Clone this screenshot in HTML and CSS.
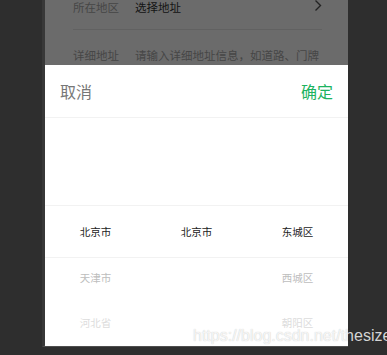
FILE: index.html
```html
<!DOCTYPE html>
<html lang="zh-CN">
<head>
    <meta charset="UTF-8">
    <meta name="viewport" content="width=device-width, initial-scale=1.0">
    <title>选择地址</title>
    <link rel="stylesheet" href="styles.css">
</head>
<body>
    <div class="device">
        <!-- Address form behind the mask -->
        <div class="page">
            <div class="form">
                <div class="field">
                    <span class="field-label">所在地区</span>
                    <span class="field-value">选择地址</span>
                    <svg class="chevron" width="8" height="13" viewBox="0 0 8 13">
                        <path d="M1.5 1.5 L6.5 6.5 L1.5 11.5" fill="none" stroke="currentColor" stroke-width="1.4"/>
                    </svg>
                </div>
                <div class="field">
                    <span class="field-label">详细地址</span>
                    <span class="field-placeholder">请输入详细地址信息，如道路、门牌号、小区、楼栋号、单元室等</span>
                </div>
            </div>
            <div class="mask"></div>
        </div>

        <!-- Region picker sheet -->
        <div class="sheet">
            <div class="sheet-header">
                <span class="cancel-btn">取消</span>
                <span class="confirm-btn">确定</span>
            </div>
            <div class="picker">
                <div class="picker-indicator"></div>
                <div class="picker-columns">
                    <div class="picker-column">
                        <div class="picker-item active">北京市</div>
                        <div class="picker-item near">天津市</div>
                        <div class="picker-item far">河北省</div>
                    </div>
                    <div class="picker-column">
                        <div class="picker-item active">北京市</div>
                    </div>
                    <div class="picker-column">
                        <div class="picker-item active">东城区</div>
                        <div class="picker-item near">西城区</div>
                        <div class="picker-item far">朝阳区</div>
                    </div>
                </div>
            </div>
        </div>
    </div>

    <div class="watermark">https://blog.csdn.net/thesize</div>
</body>
</html>
```

FILE: styles.css
```css
:root {
    --outer-bg: #2e2e2e;
    --green: #1db35f;
    --line: #f2f2f2;
}

* {
    margin: 0;
    padding: 0;
    box-sizing: border-box;
}

body {
    background: var(--outer-bg);
    font-family: 'Noto Sans CJK SC', 'Liberation Sans', sans-serif;
    width: 387px;
    height: 355px;
    overflow: hidden;
    position: relative;
}

.device {
    width: 306px;
    height: 347px;
    margin-left: 42px;
    border-left: 3px solid #383838;
    border-bottom: 2px solid #4e4e4e;
    display: flex;
    flex-direction: column;
}

.page {
    flex: 0 0 65px;
    position: relative;
    overflow: hidden;
    background: white;
}

.form {
    margin-top: -18px;
    padding: 0 26px 0 28px;
}

.field {
    display: flex;
    align-items: flex-start;
    height: 48px;
    padding-top: 16px;
    border-bottom: 1px solid #e6e6e6;
    font-size: 11.5px;
    line-height: 18px;
}

.field-label {
    flex: 0 0 62px;
    color: #a8a8a8;
}

.field-value {
    flex: 1;
    color: #333;
}

.field-placeholder {
    flex: 1;
    color: #a8a8a8;
}

.chevron {
    color: #555;
    margin-top: 1px;
    margin-right: 0;
}

.mask {
    position: absolute;
    inset: 0;
    background: rgba(0, 0, 0, 0.58);
}

.sheet {
    flex: 1;
    background: white;
    display: flex;
    flex-direction: column;
}

.sheet-header {
    height: 53px;
    padding: 0 15px;
    display: flex;
    justify-content: space-between;
    align-items: center;
    border-bottom: 1px solid var(--line);
    font-size: 16px;
}

.cancel-btn {
    color: #777;
}

.confirm-btn {
    color: var(--green);
}

.picker {
    flex: 1;
    position: relative;
    overflow: hidden;
}

.picker-indicator {
    position: absolute;
    left: 0;
    right: 0;
    top: 87px;
    height: 53px;
    border-top: 1px solid var(--line);
    border-bottom: 1px solid var(--line);
}

.picker-columns {
    display: grid;
    grid-template-columns: repeat(3, 1fr);
    padding-top: 91px;
}

.picker-item {
    height: 45.5px;
    line-height: 45.5px;
    text-align: center;
    font-size: 10.5px;
}

.picker-item.active {
    color: #222;
}

.picker-item.near {
    color: #bdbdbd;
}

.picker-item.far {
    color: #dcdcdc;
}

.watermark {
    position: absolute;
    left: 193px;
    top: 327px;
    font-family: 'Liberation Sans', sans-serif;
    font-size: 16px;
    color: rgba(255, 255, 255, 0.82);
    text-shadow: 0 0 1px rgba(0, 0, 0, 0.25);
    white-space: nowrap;
}
```
